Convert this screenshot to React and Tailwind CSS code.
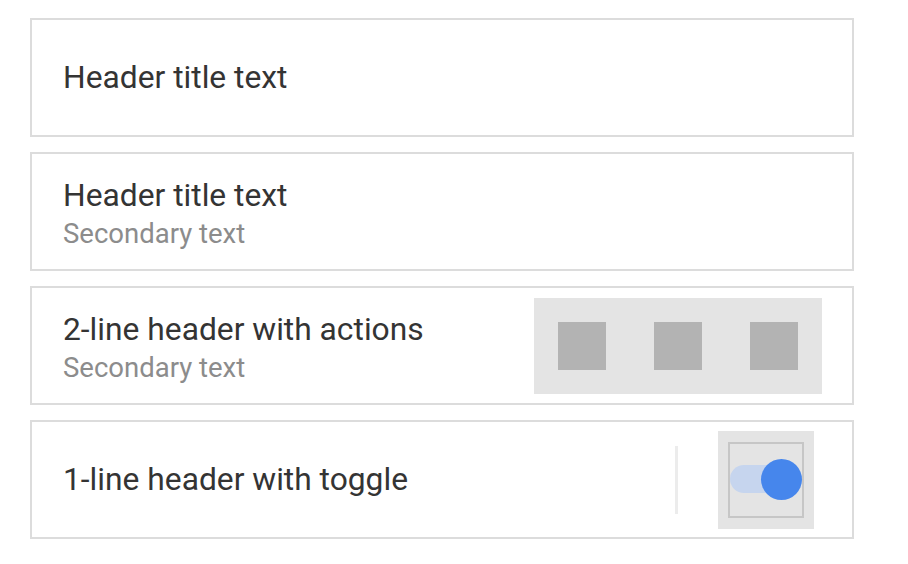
import React from 'react';

const font = { fontFamily: 'Roboto, "Noto Sans", sans-serif' };

const Card = ({ children }) => (
  <div className="flex items-center justify-between h-[119px] w-[824px] border-2 border-[#dcdcdc] bg-white pl-[31px]">
    {children}
  </div>
);

const Title = ({ children }) => (
  <p className="text-[31.75px] leading-[38px] text-[#343434]">{children}</p>
);

const Secondary = ({ children }) => (
  <p className="text-[27.5px] leading-[38px] text-[#8c8c8c]">{children}</p>
);

export default function App() {
  return (
    <div className="min-h-screen bg-white pt-[18px] pl-[30px]" style={font}>
      <div className="flex flex-col gap-[15px]">
        <Card>
          <Title>Header title text</Title>
        </Card>

        <Card>
          <div className="pt-[6px]">
            <Title>Header title text</Title>
            <Secondary>Secondary text</Secondary>
          </div>
        </Card>

        <Card>
          <div className="pt-[6px]">
            <Title>2-line header with actions</Title>
            <Secondary>Secondary text</Secondary>
          </div>
          {/* Action slots */}
          <div className="flex items-center gap-12 bg-[#e4e4e4] p-6 mr-[30px]">
            <div className="w-12 h-12 bg-[#b3b3b3]" />
            <div className="w-12 h-12 bg-[#b3b3b3]" />
            <div className="w-12 h-12 bg-[#b3b3b3]" />
          </div>
        </Card>

        <Card>
          <Title>1-line header with toggle</Title>
          <div className="flex items-center mr-[38px]">
            <div className="w-[3px] h-[68px] bg-[#ececec] mr-10" />
            {/* Toggle */}
            <div className="w-24 h-[98px] bg-[#e4e4e4] flex items-center justify-center">
              <div className="relative w-[76px] h-[76px] border-2 border-[#c6c6c6]">
                <div className="absolute left-0 top-[21px] w-[50px] h-[28px] rounded-full bg-[#c6d5ee]" />
                <div className="absolute right-0 top-[15px] w-[41px] h-[41px] rounded-full bg-[#4686ec]" />
              </div>
            </div>
          </div>
        </Card>
      </div>
    </div>
  );
}
